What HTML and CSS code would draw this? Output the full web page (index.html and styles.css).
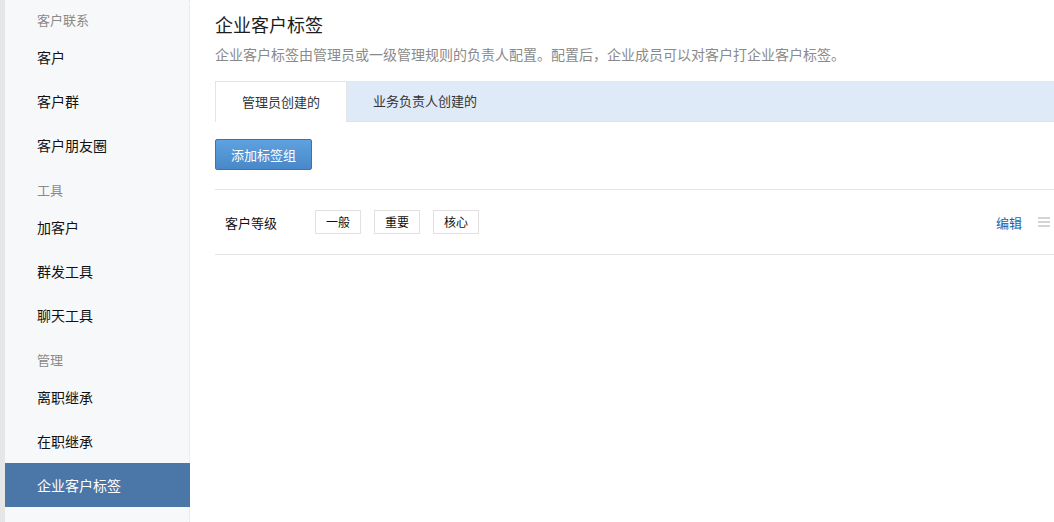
FILE: index.html
```html
<!DOCTYPE html>
<html lang="zh-CN">
<head>
  <meta charset="UTF-8">
  <title>企业客户标签</title>
  <link rel="stylesheet" href="styles.css">
</head>
<body>
  <div class="app">
    <div class="edge"></div>

    <!-- 左侧菜单 -->
    <nav class="side-nav">
      <div class="nav-group">
        <div class="nav-title">客户联系</div>
        <a class="nav-item">客户</a>
        <a class="nav-item">客户群</a>
        <a class="nav-item">客户朋友圈</a>
      </div>
      <div class="nav-group">
        <div class="nav-title">工具</div>
        <a class="nav-item">加客户</a>
        <a class="nav-item">群发工具</a>
        <a class="nav-item">聊天工具</a>
      </div>
      <div class="nav-group">
        <div class="nav-title">管理</div>
        <a class="nav-item">离职继承</a>
        <a class="nav-item">在职继承</a>
        <a class="nav-item active">企业客户标签</a>
      </div>
    </nav>

    <!-- 主内容 -->
    <main class="content">
      <h1 class="page-title">企业客户标签</h1>
      <p class="page-desc">企业客户标签由管理员或一级管理规则的负责人配置。配置后，企业成员可以对客户打企业客户标签。</p>

      <div class="tabs">
        <div class="tab active">管理员创建的</div>
        <div class="tab">业务负责人创建的</div>
      </div>

      <div class="toolbar">
        <button type="button" class="btn-primary">添加标签组</button>
      </div>

      <div class="tag-list">
        <div class="tag-group">
          <div class="group-name">客户等级</div>
          <div class="tags">
            <span class="tag">一般</span>
            <span class="tag">重要</span>
            <span class="tag">核心</span>
          </div>
          <div class="group-ops">
            <a class="op-edit">编辑</a>
            <span class="drag-handle">
              <svg viewBox="0 0 12 12" width="12" height="12">
                <rect x="0" y="1" width="12" height="2" fill="#d4d4d4"/>
                <rect x="0" y="5" width="12" height="2" fill="#d4d4d4"/>
                <rect x="0" y="9" width="12" height="2" fill="#d4d4d4"/>
              </svg>
            </span>
          </div>
        </div>
      </div>
    </main>
  </div>
</body>
</html>
```

FILE: styles.css
```css
:root {
  --color-text: #222222;
  --color-muted: #8a8a8a;
  --color-border: #e4e4e4;
  --color-side-bg: #f7f8fa;
  --color-active: #4a76a8;
  --color-tab-bar: #dfeaf8;
  --color-link: #1a64ae;
  --font-main: "Noto Sans CJK SC", "Noto Sans", "Liberation Sans", sans-serif;
}

* {
  box-sizing: border-box;
  margin: 0;
  padding: 0;
}

html, body {
  height: 100%;
}

body {
  font-family: var(--font-main);
  color: var(--color-text);
  background: #ffffff;
  overflow: hidden;
}

.app {
  display: flex;
  height: 100%;
}

.edge {
  width: 5px;
  flex-shrink: 0;
  background: #e6e6e6;
}

/* 左侧菜单 */
.side-nav {
  width: 185px;
  flex-shrink: 0;
  background: var(--color-side-bg);
  border-right: 1px dotted #dde2ea;
  padding-top: 5px;
  display: flex;
  flex-direction: column;
  gap: 8px;
}

.nav-title {
  height: 30px;
  line-height: 30px;
  padding-left: 32px;
  font-size: 13px;
  color: var(--color-muted);
}

.nav-item {
  display: block;
  height: 44px;
  line-height: 44px;
  padding-left: 32px;
  font-size: 14px;
  color: #111111;
  cursor: pointer;
}

.nav-item.active {
  background: var(--color-active);
  color: #ffffff;
  margin-right: -1px;
}

/* 主内容 */
.content {
  flex: 1;
  min-width: 0;
  padding: 12px 0 0 25px;
}

.page-title {
  font-size: 18px;
  font-weight: normal;
  line-height: 24px;
  color: #1c1c1c;
}

.page-desc {
  margin-top: 8px;
  font-size: 14px;
  line-height: 20px;
  color: var(--color-muted);
}

.tabs {
  margin-top: 17px;
  display: flex;
  height: 41px;
  background: var(--color-tab-bar);
  border-bottom: 1px solid #d9e2ee;
}

.tab {
  padding: 0 26px;
  line-height: 40px;
  font-size: 13px;
  color: #333333;
  cursor: pointer;
}

.tab.active {
  background: #ffffff;
  border: 1px solid var(--color-border);
  border-bottom: none;
  height: 41px;
  width: 132px;
}

.toolbar {
  padding: 17px 0 19px;
}

.btn-primary {
  height: 31px;
  padding: 0 15px;
  font-family: var(--font-main);
  font-size: 13px;
  color: #ffffff;
  background: linear-gradient(#5fa2e0, #4888c9);
  border: 1px solid #3b74ad;
  border-radius: 2px;
  cursor: pointer;
}

.tag-list {
  border-top: 1px solid var(--color-border);
}

.tag-group {
  display: flex;
  align-items: center;
  height: 65px;
  padding-left: 10px;
  border-bottom: 1px solid var(--color-border);
}

.group-name {
  width: 90px;
  font-size: 13px;
  color: #111111;
}

.tags {
  flex: 1;
  display: flex;
  gap: 13px;
}

.tag {
  width: 46px;
  height: 24px;
  line-height: 22px;
  text-align: center;
  font-size: 12px;
  color: #111111;
  border: 1px solid #e1e1e1;
  background: #ffffff;
}

.group-ops {
  display: flex;
  align-items: center;
  gap: 16px;
  padding-right: 4px;
}

.op-edit {
  font-size: 13px;
  color: var(--color-link);
  cursor: pointer;
}

.drag-handle {
  display: flex;
  width: 12px;
  height: 12px;
}
```
